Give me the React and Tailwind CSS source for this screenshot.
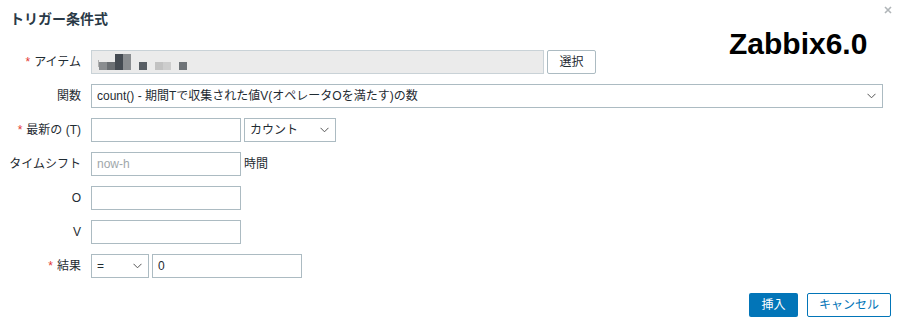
import React from "react";

const font = { fontFamily: '"Liberation Sans", Arial, "Noto Sans CJK JP", sans-serif' };

function Chevron() {
  return (
    <svg width="9" height="6" viewBox="0 0 9 6" className="shrink-0">
      <polyline points="0.5,0.8 4.5,4.8 8.5,0.8" fill="none" stroke="#555" strokeWidth="1" />
    </svg>
  );
}

function Select({ w, text }) {
  return (
    <div className={`${w} h-[24px] border border-[#acbbc2] bg-white flex items-center justify-between pl-[5px] pr-[6px] text-[12px] text-[#1f2c33]`}>
      <span className="truncate">{text}</span>
      <Chevron />
    </div>
  );
}

function Input({ w = "w-[150px]", value, placeholder }) {
  return (
    <div className={`${w} h-[24px] border border-[#acbbc2] bg-white flex items-center px-[5px] text-[12px] text-[#1f2c33]`}>
      {value ? <span>{value}</span> : placeholder ? <span className="text-[#a0a7ab]">{placeholder}</span> : null}
    </div>
  );
}

function Label({ children, req }) {
  return (
    <div className="h-[24px] flex items-center justify-end text-[12px] text-[#1f2c33] whitespace-nowrap">
      {req && <span className="text-[#e33734] mr-[4px]">*</span>}
      {children}
    </div>
  );
}

function Pixels() {
  const blocks = [
    [7, 11, 8, 8, "#8a8d90"],
    [15, 11, 8, 8, "#6b6f73"],
    [23, 3, 8, 16, "#454b52"],
    [31, 3, 8, 16, "#8a8d90"],
    [47, 11, 8, 8, "#585e64"],
    [63, 11, 8, 8, "#c2c2c2"],
    [71, 11, 8, 8, "#cdcdcd"],
    [87, 11, 8, 8, "#6f7478"],
  ];
  return (
    <svg width="100" height="22" viewBox="0 0 100 22">
      <rect x="6" y="9" width="1" height="7" fill="#b0b0b0" />
      {blocks.map((b, i) => (
        <rect key={i} x={b[0]} y={b[1]} width={b[2]} height={b[3]} fill={b[4]} />
      ))}
    </svg>
  );
}

export default function App() {
  return (
    <div className="relative w-[900px] h-[326px] bg-white overflow-hidden" style={font}>
      <div className="px-[10px] pt-[9px]">
        <div className="text-[14px] leading-[20px] font-bold text-[#2a3a47]">トリガー条件式</div>
      </div>

      <svg className="absolute left-[884px] top-[6px]" width="8" height="8" viewBox="0 0 8 8">
        <path d="M1 1 L7 7 M7 1 L1 7" stroke="#b0b5b8" strokeWidth="1.6" />
      </svg>

      <div className="absolute left-[729px] top-[29px] text-[30px] leading-[30px] font-bold text-black" style={font}>
        Zabbix6.0
      </div>

      <div className="mt-[21px] grid grid-cols-[81px_1fr] gap-x-[10px] gap-y-[10px]">
        <Label req>アイテム</Label>
        <div className="flex items-center gap-[3px]">
          <div className="w-[453px] h-[24px] border border-[#c9d2d7] bg-[#ebebeb] flex items-center">
            <Pixels />
          </div>
          <div className="w-[49px] h-[24px] border border-[#acbbc2] bg-white rounded-[2px] flex items-center justify-center text-[12px] text-[#1f2c33]">
            選択
          </div>
        </div>

        <Label>関数</Label>
        <Select w="w-[792px]" text="count() - 期間Tで収集された値V(オペレータOを満たす)の数" />

        <Label req>最新の (T)</Label>
        <div className="flex items-center gap-[3px]">
          <Input />
          <Select w="w-[92px]" text="カウント" />
        </div>

        <Label>タイムシフト</Label>
        <div className="flex items-center gap-[3px]">
          <Input placeholder="now-h" />
          <span className="text-[12px] text-[#1f2c33]">時間</span>
        </div>

        <Label>O</Label>
        <Input />

        <Label>V</Label>
        <Input />

        <Label req>結果</Label>
        <div className="flex items-center gap-[3px]">
          <Select w="w-[58px]" text="=" />
          <Input value="0" />
        </div>
      </div>

      <div className="mt-[15px] flex justify-end gap-[9px] pr-[9px]">
        <div className="w-[49px] h-[24px] bg-[#0275b8] rounded-[2px] flex items-center justify-center text-[12px] text-white">
          挿入
        </div>
        <div className="w-[84px] h-[24px] border border-[#0275b8] bg-white rounded-[2px] flex items-center justify-center text-[12px] text-[#0275b8]">
          キャンセル
        </div>
      </div>
    </div>
  );
}
